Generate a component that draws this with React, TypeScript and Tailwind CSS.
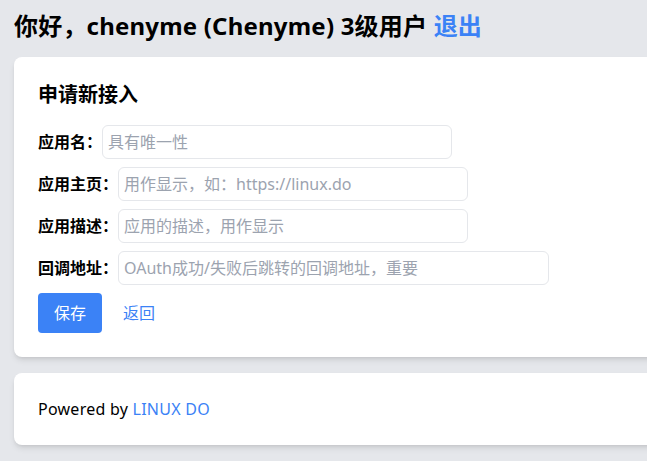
const fields = [
  { label: "应用名：", placeholder: "具有唯一性", width: "w-[350px]" },
  { label: "应用主页：", placeholder: "用作显示，如：https://linux.do", width: "w-[350px]" },
  { label: "应用描述：", placeholder: "应用的描述，用作显示", width: "w-[350px]" },
  { label: "回调地址：", placeholder: "OAuth成功/失败后跳转的回调地址，重要", width: "w-[431px]" },
];

export default function App() {
  return (
    <div
      className="min-h-screen w-screen overflow-hidden bg-[#e5e7eb] px-[14px] pt-[10px] text-black"
      style={{ fontFamily: '"Noto Sans", "Noto Sans CJK SC", sans-serif' }}
    >
      <h1 className="mb-[15px] whitespace-nowrap text-2xl font-bold tracking-[0.2px]">
        你好，chenyme (Chenyme) 3级用户{" "}
        <a href="#" className="text-[#3b82f6]">
          退出
        </a>
      </h1>

      <div className="mb-4 w-[720px] rounded-lg bg-white p-6 shadow-md">
        <h2 className="mb-4 text-xl font-bold">申请新接入</h2>
        <form className="flex flex-col gap-2">
          {fields.map((f) => (
            <div key={f.label} className="flex items-center">
              <label className="font-bold">{f.label}</label>
              <input
                type="text"
                placeholder={f.placeholder}
                className={`${f.width} h-[34px] rounded-md border border-[#e5e7eb] px-[5px] text-base outline-none placeholder:text-[#9ca3af]`}
              />
            </div>
          ))}
          <div className="flex items-center">
            <button type="button" className="rounded bg-[#3b82f6] px-4 py-2 text-white">
              保存
            </button>
            <a href="#" className="ml-[21px] text-[#3b82f6]">
              返回
            </a>
          </div>
        </form>
      </div>

      <div className="w-[720px] rounded-lg bg-white p-6 shadow-md">
        <span className="tracking-[0.25px]">Powered by </span>
        <a href="#" className="tracking-[0.25px] text-[#3b82f6]">
          LINUX DO
        </a>
      </div>
    </div>
  );
}
